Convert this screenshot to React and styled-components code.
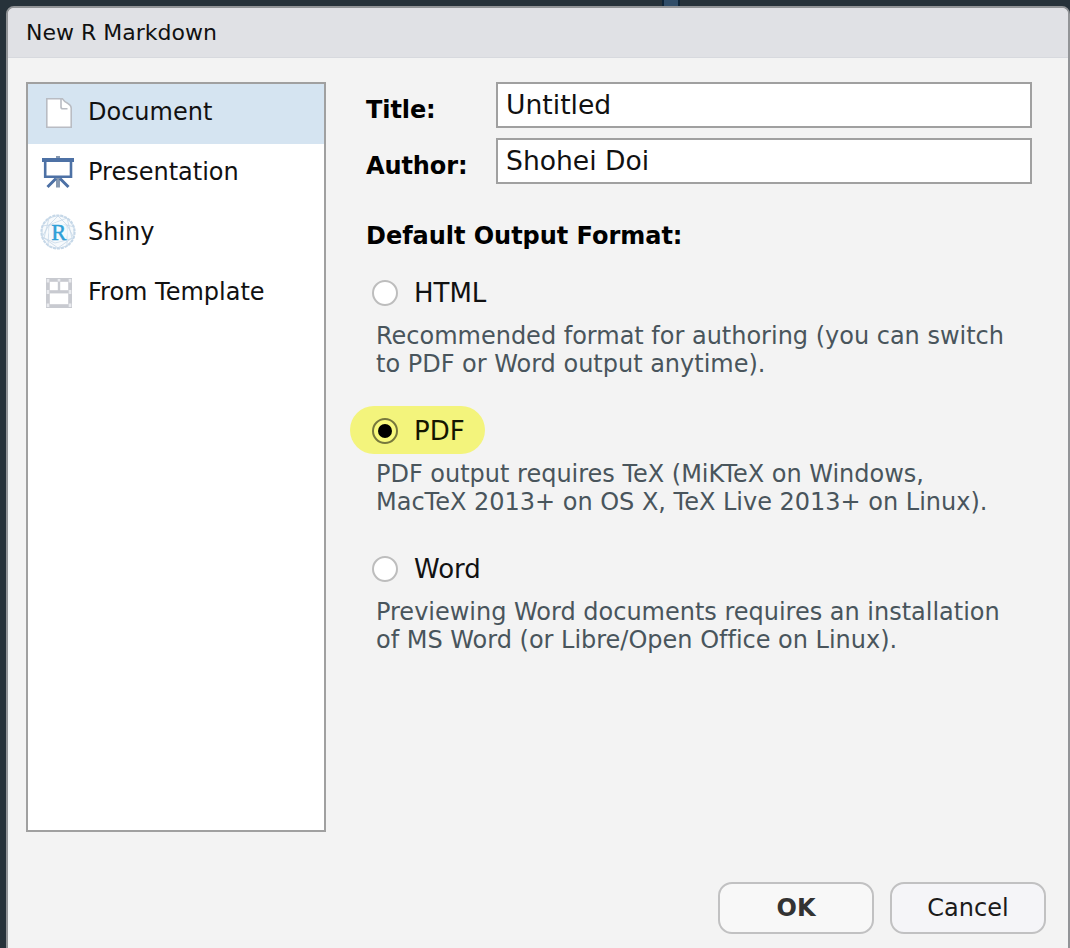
import React, { useState } from "react";
import styled, { createGlobalStyle } from "styled-components";

const GlobalStyle = createGlobalStyle`
  * { box-sizing: border-box; }
  body {
    margin: 0;
    overflow: hidden;
    background: #27323a;
    font-family: "DejaVu Sans", sans-serif;
    color: #111;
  }
`;

const Desktop = styled.div`
  height: 948px;
  width: 1070px;
  display: flex;
  flex-direction: column;
  overflow: hidden;
  background: #27323a;
`;

const PaneGap = styled.div`
  flex: none;
  width: 18px;
  height: 6px;
  margin-left: 662px;
  background: #304d69;
  border: solid #0e2438;
  border-width: 0 2px;
`;

const Dialog = styled.div`
  flex: none;
  display: flex;
  flex-direction: column;
  width: 1064px;
  height: 960px;
  margin-left: 6px;
  border: 2px solid #929497;
  border-radius: 8px 8px 0 0;
  background: #f3f3f3;
  overflow: hidden;
`;

const Caption = styled.div`
  flex: none;
  height: 50px;
  padding: 0 18px;
  border-bottom: 1px solid #d7d9de;
  background: #e0e1e5;
  font-size: 22px;
  line-height: 50px;
`;

const Content = styled.div`
  flex: none;
  display: flex;
  height: 774px;
  padding: 24px 36px 0 18px;
`;

const List = styled.div`
  flex: none;
  width: 300px;
  height: 750px;
  border: 2px solid #a0a0a0;
  background: #fff;
`;

const ListItem = styled.div`
  display: flex;
  align-items: center;
  height: 60px;
  padding-left: 12px;
  background: ${(p) => (p.$selected ? "#d5e4f1" : "transparent")};
  font-size: 24px;
  line-height: 56px;
  cursor: default;

  svg { flex: none; margin: 0 12px 4px 0; }
  span { height: 60px; }
`;

const Form = styled.div`
  flex: 1;
  margin-left: 40px;
`;

const Field = styled.label`
  display: flex;
  height: 46px;
  margin-bottom: 10px;
`;

const FieldLabel = styled.span`
  width: 130px;
  padding-top: 9px;
  font-size: 24px;
  font-weight: bold;
  line-height: 38px;
  letter-spacing: -0.1px;
  color: #000;
`;

const TextInput = styled.input`
  flex: 1;
  min-width: 0;
  height: 46px;
  padding: 0 8px 2px;
  border: 2px solid #a0a0a0;
  border-radius: 0;
  outline: none;
  background: #fff;
  color: #111;
  font: 26.6px "DejaVu Sans", sans-serif;
`;

const Heading = styled.div`
  margin-top: 28px;
  height: 56px;
  font-size: 24px;
  font-weight: bold;
  line-height: 48px;
  letter-spacing: -0.03px;
  color: #000;
`;

const Format = styled.div`
  height: 138px;
`;

const FormatChoice = styled.label`
  display: inline-flex;
  align-items: center;
  height: 48px;
  margin-left: -16px;
  padding: 2px 20px 0 22px;
  border-radius: 24px;
  background: ${(p) => (p.$marked ? "#f3f47c" : "transparent")};
  font-size: 26px;
  line-height: 46px;
  color: ${(p) => (p.$marked ? "#141500" : "#111")};
`;

const Radio = styled.span`
  display: flex;
  align-items: center;
  justify-content: center;
  width: 26px;
  height: 26px;
  margin: 0 16px 0 0;
  border: 2px solid ${(p) => (p.$checked ? "#77783d" : "#bdbdbd")};
  border-radius: 50%;
  background: ${(p) => (p.$checked ? "#f8f97d" : "#fff")};

  &::after {
    content: "";
    width: 14px;
    height: 14px;
    border-radius: 50%;
    background: ${(p) => (p.$checked ? "#000" : "transparent")};
  }
`;

const Description = styled.div`
  padding: 6px 0 0 10px;
  font-size: 24px;
  line-height: 28px;
  letter-spacing: -0.01px;
  color: #49555c;
  white-space: pre;
`;

const Actions = styled.div`
  display: flex;
  justify-content: flex-end;
  gap: 16px;
  padding: 50px 22px 0 0;
`;

const Button = styled.button`
  width: 156px;
  height: 52px;
  padding: 0;
  border: 2px solid #c1c1c2;
  border-radius: 14px;
  background: ${(p) => (p.$primary ? "#f8f8f8" : "#f5f5f8")};
  color: ${(p) => (p.$primary ? "#333" : "#1b1b1b")};
  font: ${(p) => (p.$primary ? "bold" : "normal")} 24px "DejaVu Sans", sans-serif;
`;

const DocumentIcon = () => (
  <svg width="36" height="36" viewBox="0 0 36 36" fill="#fff" stroke="#b9bcc3" strokeWidth="1.6">
    <path d="M6.8 4.8H22.5Q24.5 8 28 9.6Q31.2 11.5 31.2 14V33.2H6.8Z" />
    <path d="M21 5V13Q21 14.8 22.8 14.8H27.5" fill="none" />
  </svg>
);

const PresentationIcon = () => (
  <svg width="36" height="36" viewBox="0 0 36 36" fill="none" stroke="#4d71a5">
    <path d="M18 2V5" stroke="#8799b0" strokeWidth="4" />
    <path d="M2 6H34" strokeWidth="3.8" />
    <path d="M5.2 8V22.8H31V8" strokeWidth="2.6" />
    <path d="M18 24V33.5" stroke="#8799b0" strokeWidth="4" />
    <path d="M16 24.5L7.5 33M20 24.5L28.5 33" strokeWidth="3" />
  </svg>
);

const ShinyIcon = () => (
  <svg width="36" height="36" viewBox="0 0 36 36" fill="none" stroke="#c6d8e8">
    <circle cx="18" cy="18" r="16.6" fill="#f7fafc" strokeWidth="2" strokeDasharray="3 1" />
    <path d="M9 4L18 1.5L27 4L34 13V24L27 32L18 34.5L8 32L2 23V12ZM9 4L4 24L18 34L32 24L27 4L9 11L2 23L15 29L34 24L27 11L18 2L9 11L8 32M27 11L27 32M2 12L9 11L27 11L34 13" strokeWidth="0.8" />
    <circle cx="18" cy="18" r="9.5" fill="#f5f9fc" stroke="none" />
    <text x="11.2" y="25.8" textLength="15" lengthAdjust="spacingAndGlyphs" fontFamily="Liberation Serif, serif" fontSize="23.5" fill="#2f9fd7" stroke="#2f9fd7" strokeWidth="0.5">R</text>
  </svg>
);

const TemplateIcon = () => (
  <svg width="36" height="36" viewBox="0 0 36 36" fill="none" stroke="#c8cad0">
    <rect x="7.9" y="5.9" width="22.2" height="26.2" strokeWidth="3.8" />
    <path d="M9 17.8H29" strokeWidth="3.2" />
    <path d="M19 7V17" strokeWidth="2.4" />
    <path d="M8 5V8.5M30 5V8.5M8 16V20M30 16V20M8 29.5V33M30 29.5V33M19 5V7.5" stroke="#e9eaee" strokeWidth="2.6" />
  </svg>
);

const categories = [
  { name: "Document", Icon: DocumentIcon },
  { name: "Presentation", Icon: PresentationIcon },
  { name: "Shiny", Icon: ShinyIcon },
  { name: "From Template", Icon: TemplateIcon },
];

const formats = [
  {
    name: "HTML",
    text: "Recommended format for authoring (you can switch\nto PDF or Word output anytime).",
  },
  {
    name: "PDF",
    text: "PDF output requires TeX (MiKTeX on Windows,\nMacTeX 2013+ on OS X, TeX Live 2013+ on Linux).",
  },
  {
    name: "Word",
    text: "Previewing Word documents requires an installation\nof MS Word (or Libre/Open Office on Linux).",
  },
];

export default function App() {
  const [category, setCategory] = useState("Document");
  const [format, setFormat] = useState("PDF");

  return (
    <Desktop>
      <GlobalStyle />
      <PaneGap />
      <Dialog>
        <Caption>New R Markdown</Caption>
        <Content>
          <List>
            {categories.map(({ name, Icon }) => (
              <ListItem key={name} $selected={name === category} onClick={() => setCategory(name)}>
                <Icon />
                <span>{name}</span>
              </ListItem>
            ))}
          </List>
          <Form>
            <Field>
              <FieldLabel>Title:</FieldLabel>
              <TextInput defaultValue="Untitled" spellCheck={false} />
            </Field>
            <Field>
              <FieldLabel>Author:</FieldLabel>
              <TextInput defaultValue="Shohei Doi" spellCheck={false} />
            </Field>
            <Heading>Default Output Format:</Heading>
            {formats.map(({ name, text }) => (
              <Format key={name}>
                <FormatChoice $marked={name === format} onClick={() => setFormat(name)}>
                  <Radio $checked={name === format} />
                  {name}
                </FormatChoice>
                <Description>{text}</Description>
              </Format>
            ))}
          </Form>
        </Content>
        <Actions>
          <Button $primary>OK</Button>
          <Button>Cancel</Button>
        </Actions>
      </Dialog>
    </Desktop>
  );
}
